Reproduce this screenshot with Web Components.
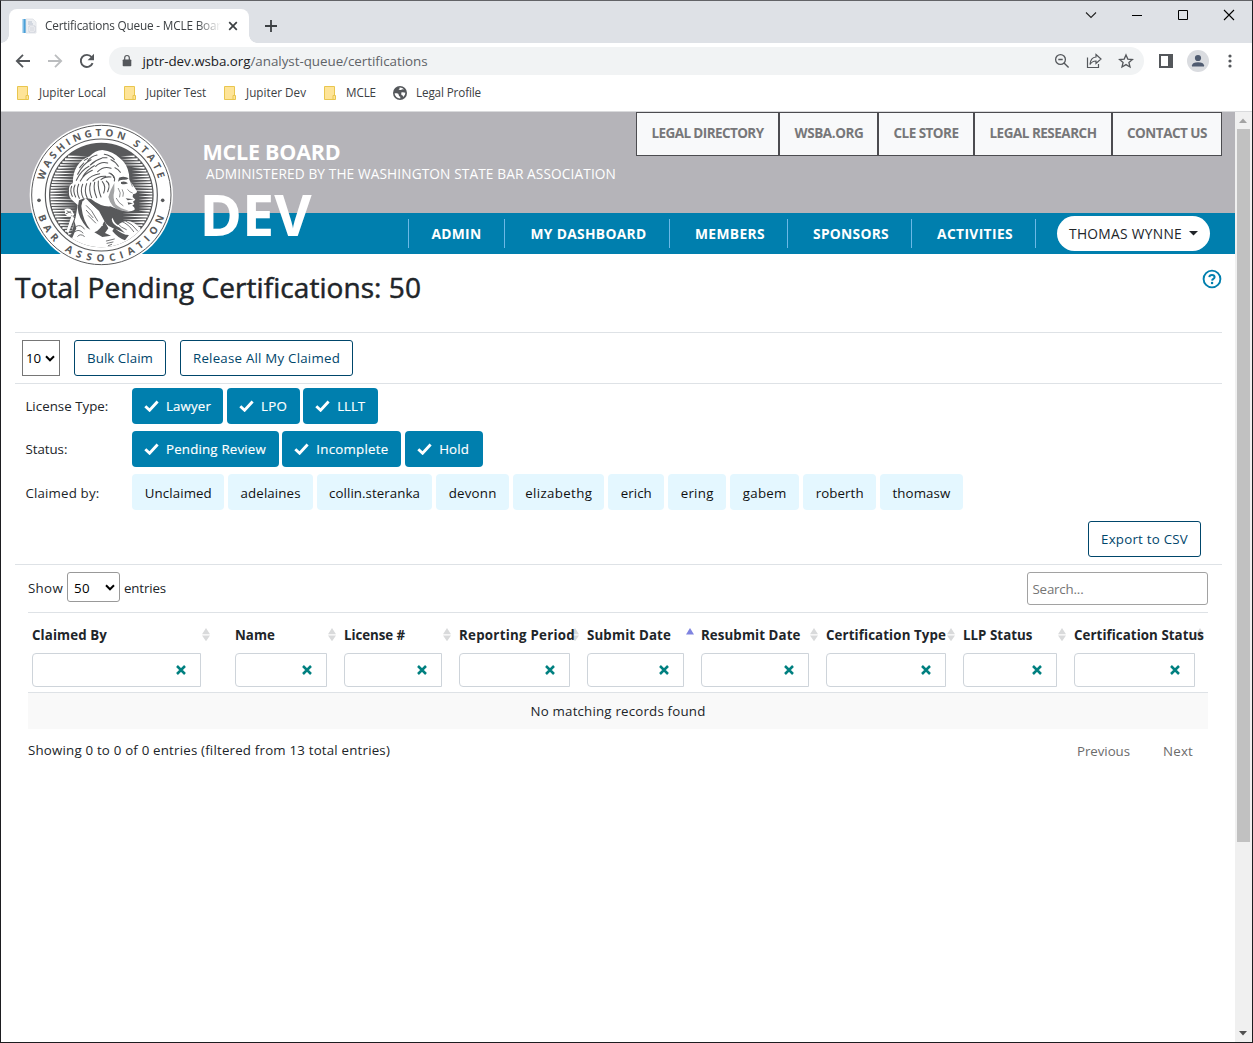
<!DOCTYPE html>
<html lang="en">
<head>
<meta charset="utf-8">
<title>Certifications Queue - MCLE Board</title>
<style>
html,body{margin:0;height:100%;overflow:hidden;background:#fff}
body{font-family:"Open Sans","Noto Sans",sans-serif;font-size:13.3px;color:#212529}
</style>
</head>
<body>
<app-window></app-window>
<script>
const make = (name, css, html, after) => customElements.define(name, class extends HTMLElement {
  constructor() { super(); this.attachShadow({mode: 'open'}); }
  connectedCallback() {
    const body = typeof html === 'function' ? html(this) : html;
    this.shadowRoot.innerHTML = `<style>*{box-sizing:border-box}:host{box-sizing:border-box;display:block}${css}</style>${body}`;
    if (after) after(this);
  }
});
const t = (w, s, cls = '') => `<fit-text w="${w}" class="${cls}">${s}</fit-text>`;

/* ---------- browser chrome ---------- */
make('app-window', `
  :host{width:1253px;height:1043px;display:flex;flex-direction:column;border:1px solid #1d1d20;border-top-color:#626367;background:#fff}
  .view{flex:1;display:flex;min-height:0;border-top:1px solid #d9dadc}
  page-view{flex:1;min-width:0}`,
  `<tab-strip></tab-strip><tool-bar></tool-bar><bookmark-bar></bookmark-bar>
   <div class="view"><page-view></page-view><scroll-bar></scroll-bar></div>`);

make('tab-strip', `
  :host{height:42px;background:#dee1e6;display:flex;align-items:flex-end;padding-left:8px;flex:none}
  .tab{width:240px;height:34px;background:#fff;border-radius:8px 8px 0 0;display:flex;align-items:center;padding:0 10px 0 12px;position:relative;font-size:11.8px;color:#3c4043}
  .tab::before,.tab::after{content:"";position:absolute;bottom:0;width:8px;height:8px}
  .tab::before{left:-8px;background:radial-gradient(circle at 0 0,transparent 7.5px,#fff 8px)}
  .tab::after{right:-8px;background:radial-gradient(circle at 100% 0,transparent 7.5px,#fff 8px)}
  .title{width:176px;margin:-2px 0 0 8px;-webkit-mask-image:linear-gradient(90deg,#000 152px,transparent 176px)}
  .x{margin-left:7px}
  .plus{margin:0 0 10px 15px}
  .win{margin-left:auto;display:flex;align-self:flex-start;padding:8px 17px 0 0;gap:34px}
  svg{display:block;flex:none}`,
  `<div class="tab">
     <svg width="16" height="16" viewBox="0 0 16 16"><path d="M1 1h4v14H1z" fill="#4aa0d8"/><path d="M1 1h1.5v14H1z" fill="#b9dcf3"/><path d="M5 1h7l3 3v11H5z" fill="#eef0f3" stroke="#dddfe4" stroke-width=".8"/><path d="M7 4h4M7 6h5" stroke="#aab4c4" stroke-width=".8"/><path d="M8 8h6v6H8z" fill="#fff" stroke="#c4c8d2" stroke-width=".8"/><path d="M9 10h4M9 12h4" stroke="#aeb4c2" stroke-width=".8"/></svg>
     <div class="title">${t(176, 'Certifications Queue - MCLE Boar')}</div>
     <svg class="x" width="10" height="10" viewBox="0 0 10 10"><path d="M1.2 1.2l7.6 7.6M8.8 1.2L1.2 8.8" stroke="#3c4043" stroke-width="1.7"/></svg>
   </div>
   <svg class="plus" width="14" height="14" viewBox="0 0 14 14"><path d="M7 1v12M1 7h12" stroke="#3c4043" stroke-width="1.8"/></svg>
   <div class="win">
     <svg width="12" height="12" viewBox="0 0 12 12"><path d="M1 3.5l5 5 5-5" fill="none" stroke="#222" stroke-width="1.1"/></svg>
     <svg width="12" height="12" viewBox="0 0 12 12"><path d="M1 6.5h10" stroke="#000"/></svg>
     <svg width="12" height="12" viewBox="0 0 12 12"><path d="M1.5 1.5h9v9h-9z" fill="none" stroke="#000"/></svg>
     <svg width="12" height="12" viewBox="0 0 12 12"><path d="M1 1l10 10M11 1L1 11" stroke="#000" stroke-width="1.1"/></svg>
   </div>`);

make('tool-bar', `
  :host{height:36px;display:flex;align-items:center;padding:0 16px 0 14px;flex:none;font-size:13.4px}
  svg{display:block;flex:none}
  .nav{display:flex;gap:16px;align-items:center}
  .omni{width:1035px;height:28px;border-radius:14px;background:#f1f3f4;margin:0 0 0 14px;padding:0 10px 0 12px;display:flex;align-items:center;position:relative;flex:none}
  .url{margin-left:9.500px;display:flex;color:#5f6368}.host{color:#202124}
  .acts{margin-left:auto;display:flex;gap:16px}
  .side{margin-left:15px}
  .ava{width:22px;height:22px;border-radius:50%;background:#dadce0;margin-left:14px;overflow:hidden;flex:none}
  .dots{margin-left:19px}`,
  `<div class="nav">
     <svg width="16" height="16" viewBox="0 0 16 16"><path d="M15 8H2M8 1.8L1.8 8 8 14.2" fill="none" stroke="#54575b" stroke-width="1.8"/></svg>
     <svg width="16" height="16" viewBox="0 0 16 16"><path d="M1 8h13M8 1.8L14.2 8 8 14.2" fill="none" stroke="#bbbdbf" stroke-width="1.8"/></svg>
     <svg width="16" height="16" viewBox="0 0 16 16"><path d="M13.6 10.2A6.1 6.1 0 1 1 12.6 4" fill="none" stroke="#54575b" stroke-width="1.9"/><path d="M15 .8v6.4H8.6z" fill="#54575b"/></svg>
   </div>
   <div class="omni">
     <svg width="12" height="14" viewBox="0 0 12 14"><path d="M2.500 5.500h7q.8 0 .8.8v5.200q0 .8-.8.8h-7q-.8 0-.8-.8V6.300q0-.8.8-.8z" fill="#54575b"/><path d="M3.700 6V3.800a2.300 2.300 0 0 1 4.600 0V6" fill="none" stroke="#54575b" stroke-width="1.200"/></svg>
     <div class="url">${t(108, 'jptr-dev.wsba.org', 'host')}${t(177, '/analyst-queue/certifications')}</div>
     <div class="acts">
       <svg width="16" height="16" viewBox="0 0 16 16"><circle cx="6.500" cy="6.500" r="4.900" fill="none" stroke="#54575b" stroke-width="1.300"/><path d="M4.300 6.500h4.400M10 10l4.600 4.600" stroke="#54575b" stroke-width="1.400"/></svg>
       <svg width="16" height="16" viewBox="0 0 16 16"><path d="M1.500 4.500v10h11v-3.500" fill="none" stroke="#54575b" stroke-width="1.200"/><path d="M10 1.500l5 4.500-5 4.500V8Q6 8 4 11.500 4.500 4.500 10 4z" fill="none" stroke="#54575b" stroke-width="1.200"/></svg>
       <svg width="16" height="16" viewBox="0 0 16 16"><path d="M8 1.900l1.800 4.200 4.600.4-3.500 3 1.100 4.500L8 11.600 4 14l1.100-4.500-3.500-3 4.600-.4z" fill="none" stroke="#54575b" stroke-width="1.300"/></svg>
     </div>
   </div>
   <svg class="side" width="14" height="14" viewBox="0 0 14 14"><path d="M0 0h14v14H0z" fill="#54575b"/><path d="M2 2h7v10H2z" fill="#fff"/></svg>
   <div class="ava"><svg width="22" height="22" viewBox="0 0 22 22"><circle cx="11" cy="8" r="3.100" fill="#4f5b70"/><path d="M5 16.500v-1.200q.5-3 6-3t6 3v1.200z" fill="#4f5b70"/></svg></div>
   <svg class="dots" width="4" height="14" viewBox="0 0 4 14"><g fill="#54575b"><circle cx="2" cy="2" r="1.600"/><circle cx="2" cy="7" r="1.600"/><circle cx="2" cy="12" r="1.600"/></g></svg>`);

make('bookmark-item', `
  :host{display:flex;align-items:center;height:16px}
  svg{display:block;flex:none}
  fit-text{margin-top:-1.500px}`,
  el => (el.hasAttribute('globe')
    ? `<svg width="14" height="14" viewBox="0 0 14 14" style="margin-right:9px"><circle cx="7" cy="7" r="7" fill="#54575b"/><path d="M1.600 7.200h2.200q2 .1 2 2 .1 1.200 1.500 1.500v1.800A5.400 5.400 0 0 1 1.600 7.200zM6.600 1.600q.3 1.800-1.200 2 1.800.6 3 .1.800-.6 2-.3l.6.200Q9.500 1.500 6.600 1.600zM8.200 6.600q1.500-1 4.200.2-.2 2.800-2.200 4.300l-.5-1.600q-1.900-.3-1.500-2.900z" fill="#fff"/></svg>`
    : `<svg width="13" height="14" viewBox="0 0 13 14" style="margin-right:9px"><path d="M.5.500h10v13h-10z" fill="#fee498" stroke="#e9c64f"/><path d="M9 9.500h2.500v4H9z" fill="#fee498" stroke="#e9c64f"/></svg>`) + t(el.getAttribute('w'), el.getAttribute('label')));

make('bookmark-bar', `
  :host{height:32px;display:flex;gap:18px;padding:6px 0 0 16px;flex:none;font-size:11.700px;color:#3c4043}`,
  `<bookmark-item w="67" label="Jupiter Local"></bookmark-item><bookmark-item w="60" label="Jupiter Test"></bookmark-item>
   <bookmark-item w="60" label="Jupiter Dev"></bookmark-item><bookmark-item w="30" label="MCLE" style="margin-right:-1px"></bookmark-item>
   <bookmark-item globe w="65" label="Legal Profile"></bookmark-item>`);

make('scroll-bar', `
  :host{width:17px;background:#f0f0f0;display:flex;flex-direction:column;align-items:center;padding:6px 1px 6px 0;flex:none}
  .thumb{width:13px;height:713px;background:#c1c1c1;margin:6px 0 auto 0}`,
  `<svg width="8" height="5" viewBox="0 0 8 5"><path d="M0 5l4-4.500L8 5z" fill="#a3a3a3"/></svg><div class="thumb"></div>
   <svg width="8" height="5" viewBox="0 0 8 5"><path d="M0 0h8L4 4.500z" fill="#505050"/></svg>`);

/* ---------- site ---------- */
make('page-view', `
  main{padding:0 13px 0 14px}`,
  `<site-header></site-header>
   <main><title-row></title-row><action-row></action-row><filter-panel></filter-panel><records-table></records-table></main>`);

make('wsba-seal', `
  svg{display:block}
  text{font-family:"Open Sans",sans-serif;font-weight:700;font-size:30px;fill:#58595b}`,
  () => {
    let wedges = '';
    const cx = 247, cy = 252, r = 153;
    for (let y = 136; y < 372; y += 8.600) {
      const half = Math.sqrt(r * r - (y - cy) ** 2);
      const l = cx - half, rr = cx + half;
      const li = y < 160 ? 205 : y < 225 ? 172 : y < 262 ? 150 : y < 320 ? 172 : 165;
      const ri = y < 170 ? 305 : y < 240 ? 338 : y < 300 ? 358 : y < 330 ? 310 : 330;
      if (li > l) wedges += `M${l} ${y - 2.800}L${li} ${y}L${l} ${y + 2.800}z`;
      if (ri < rr) wedges += `M${rr} ${y - 2.800}L${ri} ${y}L${rr} ${y + 2.800}z`;
    }
    return `<svg width="180" height="165" viewBox="0 0 540 495">
    <circle cx="247" cy="252" r="215" fill="#fff"/>
    <circle cx="247" cy="252" r="209" fill="none" stroke="#58595b" stroke-width="3"/>
    <circle cx="247" cy="252" r="168" fill="none" stroke="#58595b" stroke-width="3.500"/>
    <circle cx="247" cy="252" r="157" fill="#58595b"/>
    <clipPath id="disc"><circle cx="247" cy="252" r="157"/></clipPath>
    <path d="${wedges}" fill="#fff"/>
    <g clip-path="url(#disc)">
      <path fill="#fff" d="M250 117Q283 122 302 141Q325 158 330 190L331 206Q346 228 354 241Q354 248 342 250L341 258L349 266L342 272L346 279L340 284Q350 290 346 297Q336 304 312 300Q292 300 280 318Q284 334 296 342Q322 322 345 336Q362 346 372 366L350 392L300 420L240 424L190 410L134 396Q166 372 160 352Q172 320 176 282L160 268Q148 258 150 240Q148 222 162 216Q160 190 174 166Q190 142 212 136Q228 118 250 117z"/>
      <path fill="#fff" d="M136 296Q150 288 160 300L166 312Q152 322 140 312zM158 312L142 362L148 366L166 322z"/>
      <g fill="#58595b">
        <path d="M180 268Q200 258 216 264Q246 288 274 286Q296 296 318 303Q290 306 278 324Q280 342 302 350L318 366L296 356Q266 350 256 330L240 300L200 262Q184 276 188 292Q192 330 214 356L204 350Q178 320 176 290z"/>
        <path d="M256 330L268 352L258 366L276 374L250 378L226 364Q246 356 256 330z"/>
        <path d="M300 200Q316 194 329 202Q322 208 312 206Q302 206 297 212zM306 213Q318 208 327 217Q316 222 306 218z"/>
        <path d="M320 262L344 265L326 268zM326 274L342 277L328 281z"/>
        <path d="M268 258Q274 236 286 216L286 240Q280 262 290 280Q304 294 330 299L304 300Q276 290 268 258z" opacity=".55"/>
        <path d="M166 330L172 352L160 380L150 382Q160 366 162 352z"/>
        <path d="M286 350Q310 372 330 372L318 388Q296 380 280 360z"/>
      </g>
      <path d="M206 268Q236 288 268 290L290 304Q272 314 264 314Q236 298 206 268z" fill="#58595b"/>
      <path fill="#fff" d="M190 270Q226 290 252 344Q224 352 206 326Q190 298 190 270z"/>
      <g fill="none" stroke="#58595b" stroke-width="3.200" stroke-linecap="round">
        <path d="M176 190Q190 160 216 146M172 208Q186 178 210 166M184 210Q196 188 220 178M206 150Q216 136 234 132M214 162Q228 148 248 142M230 166Q246 150 266 156M236 182Q254 164 276 172M204 208Q216 192 242 188M222 210Q238 194 260 196M256 130Q276 134 286 146M276 146Q290 152 298 166M288 170Q298 174 304 184M250 140L264 140M192 196Q204 176 226 164M246 206Q256 196 276 198M270 186Q282 188 284 200M196 148L206 142M182 170L194 156"/>
        <path d="M158 226Q152 240 160 256M168 222Q160 238 170 258M179 220Q170 240 181 262M191 220Q182 240 193 262M203 218Q194 240 205 262M215 216Q208 236 218 260M227 214Q222 234 233 260M238 210Q236 232 246 258M250 212Q262 226 254 246M262 210Q276 220 266 242M276 190Q290 196 286 210"/>
        <path d="M298 232Q308 246 302 258M310 236Q316 246 312 256M292 262Q298 276 312 284M326 236Q332 244 340 246M334 210L340 226" stroke-width="2"/>
        <path d="M202 284L216 298M202 298L222 320M208 314L230 336M218 300L236 330M144 300L156 306M142 308L154 302M172 346Q186 338 196 354M168 362Q180 352 192 366M176 376Q184 366 196 376M262 390L286 384M264 397L282 393M268 404L278 400M306 330Q330 340 344 362M320 330Q340 338 356 360M296 338Q306 350 322 356" stroke-width="2.500"/>
      </g>
    </g>
    <circle cx="60" cy="268" r="5.500" fill="#58595b"/><circle cx="431" cy="268" r="5.500" fill="#58595b"/>
    <path id="up" d="M74.600 208.900A178 178 0 0 1 419.400 208.900" fill="none"/>
    <path id="down" d="M57.400 315.500A200 200 0 0 0 436.600 315.500" fill="none"/>
    <text textLength="464"><textPath href="#up" textLength="464">WASHINGTON STATE</textPath></text>
    <text textLength="496"><textPath href="#down" textLength="496">BAR ASSOCIATION</textPath></text>
    </svg>`;
  });

make('site-header', `
  :host{height:142px;position:relative;display:flex;flex-direction:column}
  .top{height:101px;background:#b5b4b9;display:flex;justify-content:flex-end;align-items:flex-start;padding-right:13px}
  .top a{height:44px;border:1px solid #4c4c50;background:#f8f9fa;color:#777779;font-weight:700;font-size:13.500px;display:flex;align-items:center;justify-content:center;padding-bottom:2px}
  .bar{height:41px;background:#007fae;display:flex;justify-content:flex-end;align-items:center;padding-right:25px;color:#fff;font-weight:700;font-size:13.800px}
  .bar a{height:29px;border-left:1px solid #6cb8e6;display:flex;align-items:center;justify-content:center}
  .bar a+a{padding-left:3px}
  .user{width:153px;height:35px;border-radius:17.500px;background:#fff;color:#212529;font-weight:400;display:flex;align-items:center;gap:7px;padding-left:12px}
  .end{border-left:1px solid #6cb8e6;height:29px;width:22px}
  wsba-seal{position:absolute;left:18px;top:-1.500px}
  .brand{position:absolute;left:202px;top:24px;color:#fff}
  .b1{font-weight:700;font-size:21.500px;line-height:32px;display:flex;margin-left:-.500px}
  .b2{font-size:13.700px;line-height:18px;padding-left:3px;display:flex;margin-top:-3px}
  .b3{font-weight:700;font-size:57.500px;line-height:44px;margin-top:9px;display:flex;margin-left:-3.500px}`,
  `<div class="top"><a style="width:143px">${t(112, 'LEGAL DIRECTORY')}</a><a style="width:99px;padding-left:1px">${t(69, 'WSBA.ORG')}</a><a style="width:96px">${t(65, 'CLE STORE')}</a><a style="width:138px">${t(107, 'LEGAL RESEARCH')}</a><a style="width:110px">${t(80, 'CONTACT US')}</a></div>
   <div class="bar"><a style="width:96px">${t(50, 'ADMIN')}</a><a style="width:165px">${t(116, 'MY DASHBOARD')}</a><a style="width:118px">${t(70, 'MEMBERS')}</a><a style="width:124px">${t(76, 'SPONSORS')}</a><a style="width:124px">${t(76, 'ACTIVITIES')}</a><span class="end"></span>
     <div class="user">${t(113, 'THOMAS WYNNE')}<svg width="9" height="5" viewBox="0 0 9 5"><path d="M0 0h9L4.500 4.600z" fill="#212529"/></svg></div></div>
   <div class="brand"><div class="b1">${t(138, 'MCLE BOARD')}</div><div class="b2">${t(410, 'ADMINISTERED BY THE WASHINGTON STATE BAR ASSOCIATION')}</div><div class="b3">${t(112, 'DEV')}</div></div>
   <wsba-seal></wsba-seal>`);

make('title-row', `
  :host{height:79px;display:flex;justify-content:space-between;border-bottom:1px solid #dee2e6}
  h1{margin:12px 0 0;font-size:28px;line-height:42px;font-weight:400;-webkit-text-stroke:.5px #212529}
  svg{margin:15px 0 0}`,
  `<h1>${t(406, 'Total Pending Certifications: 50')}</h1>
   <svg width="20" height="20" viewBox="0 0 20 20"><circle cx="10" cy="10" r="8.400" fill="none" stroke="#007fae" stroke-width="1.900"/><path d="M7.300 8.200Q7.500 5.900 10 5.900T12.600 8.100Q12.600 9.200 11.400 9.900T10.100 11.700" fill="none" stroke="#007fae" stroke-width="2"/><circle cx="10.050" cy="14.100" r="1.250" fill="#007fae"/></svg>`);

make('ui-button', `
  :host{display:inline-flex;align-items:center;justify-content:center;height:36px;border:1px solid #00466b;border-radius:3px;color:#00466b;background:#fff}`,
  `<slot></slot>`);

make('ui-select', `
  :host{display:inline-flex;align-items:center;justify-content:space-between;border:1px solid #767676;background:#fff;color:#000}`,
  `<slot></slot><svg width="10" height="7" viewBox="0 0 10 7"><path d="M1 1.300l4 4 4-4" fill="none" stroke="#000" stroke-width="2"/></svg>`);

make('action-row', `
  :host{height:51px;display:flex;padding:7px 0 0 7px;border-bottom:1px solid #dee2e6}
  ui-select{width:38px;height:36px;padding:0 4px 0 3px}
  ui-button{margin-left:14px}`,
  `<ui-select>${t(15, '10')}</ui-select><ui-button style="width:92px">${t(66, 'Bulk Claim')}</ui-button><ui-button style="width:173px">${t(147, 'Release All My Claimed')}</ui-button>`);

make('filter-chip', `
  :host{display:flex;align-items:center;justify-content:center;height:36px;border-radius:4px;background:#e4f7ff;color:#111}
  :host([on]){background:#007fae;color:#fff;justify-content:flex-start;padding-left:12px;-webkit-text-stroke:.15px #fff}
  svg{margin-right:7px}`,
  el => (el.hasAttribute('on') ? `<svg width="15" height="12" viewBox="0 0 15 12"><path d="M1.300 6.200l4.300 4 8-8.600" fill="none" stroke="#fff" stroke-width="2.900"/></svg>` : '') + t(el.getAttribute('w'), el.getAttribute('label')));

make('filter-row', `
  :host{display:flex;align-items:center;gap:3.700px;height:36px}
  :host(.claimed) .label{padding-top:2px}
  .label{width:103.300px;flex:none;padding-left:.400px}`,
  el => `<div class="label">${t(el.getAttribute('w'), el.getAttribute('label'))}</div><slot></slot>`);

const chip = (box, w, label, on) => `<filter-chip style="width:${box}px" w="${w}" label="${label}" ${on ? 'on' : ''}></filter-chip>`;
make('filter-panel', `
  :host{height:181px;padding:4px 21px 0 10px;border-bottom:1px solid #dee2e6}
  filter-row{margin-bottom:7px}
  .claimed filter-chip{padding:2px 0 0 .500px}
  .export{display:flex;justify-content:flex-end;margin-top:11px}`,
  `<filter-row w="83" label="License Type:">${chip(91.300, 45, 'Lawyer', 1)}${chip(72.700, 26, 'LPO', 1)}${chip(74.600, 27.500, 'LLLT', 1)}</filter-row>
   <filter-row w="42" label="Status:">${chip(146.700, 100, 'Pending Review', 1)}${chip(119.100, 72, 'Incomplete', 1)}${chip(78, 30, 'Hold', 1)}</filter-row>
   <filter-row class="claimed" w="74" label="Claimed by:">${[[92.200, 67, 'Unclaimed'], [85, 60, 'adelaines'], [115.500, 91, 'collin.steranka'], [73.300, 48, 'devonn'], [91.600, 67, 'elizabethg'], [56.100, 31, 'erich'], [58.300, 33, 'ering'], [69.400, 44, 'gabem'], [73.200, 48, 'roberth'], [83, 58, 'thomasw']].map(c => chip(...c)).join('')}</filter-row>
   <div class="export"><ui-button style="width:113px">${t(87, 'Export to CSV')}</ui-button></div>`);

make('column-head', `
  :host{position:relative;height:79px;display:flex;flex-direction:column;align-items:flex-start;padding-top:11px;font-weight:700}
  fit-text{position:relative;line-height:22px}
  .box{margin-top:7px;height:34px;border:1px solid #ced4da;border-radius:4px 0 0 4px;background:#fff;display:flex;align-items:center;justify-content:flex-end;padding-right:14px}
  .sort{position:absolute;top:15px}`,
  el => {
    const bw = +el.getAttribute('box');
    const asc = el.hasAttribute('asc');
    return `<svg class="sort" style="left:${bw + (asc ? 1.500 : .600)}px" width="8" height="14" viewBox="0 0 8 14">${asc ? '<path d="M0 6.500L4 0l4 6.500z" fill="#7f83e0"/>' : '<path d="M0 6.200L4 0l4 6.200zM0 7.500L4 13.200l4-5.700z" fill="#d9dadb"/>'}</svg>
      ${t(el.getAttribute('w'), el.getAttribute('label'))}
      <div class="box" style="width:${bw}px"><svg width="10" height="10" viewBox="0 0 10 10"><path d="M1 1l8 8M9 1L1 9" stroke="#008080" stroke-width="2.500"/></svg></div>`;
  });

make('records-table', `
  :host{padding:7px 14px 0 13px}
  .ctl{display:flex;align-items:flex-start;justify-content:space-between;height:41px;border-bottom:1px solid #dee2e6}
  .len{display:flex;align-items:center;gap:4px;height:30px}
  .len fit-text{padding-top:1px}
  ui-select{width:53px;height:30px;border-color:#999;border-radius:3px;padding:0 4px 0 6px}
  .search{width:181px;height:33px;border:1px solid #a2a2a2;border-radius:3px;display:flex;align-items:center;padding-left:4.500px;color:#757575}
  .head{display:grid;grid-template-columns:203px 109px 115px 128px 114px 125px 137px 111px 1fr;padding-left:4px;border-bottom:1px solid #dee2e6}
  .empty{height:36px;background:#f9f9f9;display:flex;align-items:center;justify-content:center}
  .foot{display:flex;justify-content:space-between;padding:10px 15px 0 0;line-height:22px}
  .pg{display:flex;gap:33px;color:#6c6c6c;padding-top:1px}`,
  `<div class="ctl"><div class="len">${t(35, 'Show')}<ui-select>${t(16, '50')}</ui-select>${t(42, 'entries')}</div><div class="search">${t(51, 'Search...')}</div></div>
   <div class="head">${[[169, 75, 'Claimed By'], [92, 40, 'Name'], [98, 61, 'License #'], [111, 116, 'Reporting Period'], [97, 84, 'Submit Date', 'asc'], [108, 99.500, 'Resubmit Date'], [120, 120, 'Certification Type'], [94, 69.500, 'LLP Status'], [121, 130, 'Certification Status']].map(([b, w, l, a]) => `<column-head box="${b}" w="${w}" label="${l}" ${a || ''}></column-head>`).join('')}</div>
   <div class="empty">${t(175, 'No matching records found')}</div>
   <div class="foot">${t(362, 'Showing 0 to 0 of 0 entries (filtered from 13 total entries)')}<div class="pg">${t(53, 'Previous')}${t(30, 'Next')}</div></div>`);

/* One line of text, tracked so that it fills exactly w pixels. */
customElements.define('fit-text', class extends HTMLElement {
  constructor() { super(); this.attachShadow({mode: 'open'}).innerHTML = '<style>:host{display:inline-block;white-space:pre;flex:none}</style><slot></slot>'; }
  connectedCallback() {
    const w = +this.getAttribute('w');
    const natural = this.getBoundingClientRect().width;
    this.style.letterSpacing = (w - natural) / this.textContent.length + 'px';
    this.style.width = w + 'px';
  }
});
</script>
</body>
</html>
